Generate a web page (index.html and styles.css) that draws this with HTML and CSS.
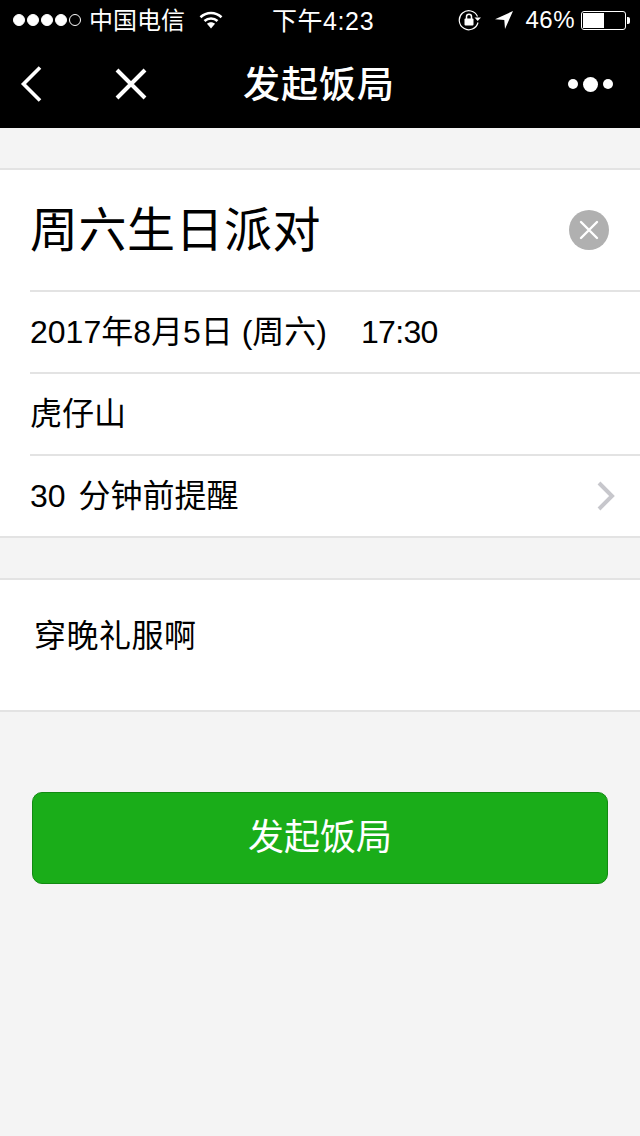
FILE: index.html
```html
<!DOCTYPE html>
<html lang="zh-CN">
<head>
  <meta charset="UTF-8" />
  <title>发起饭局</title>
  <meta name="viewport" content="width=device-width, initial-scale=1.0" />
  <link rel="stylesheet" href="styles.css">
</head>
<body>
  <div class="statusbar">
    <div class="status-left">
      <span class="signal">
        <i class="dot"></i><i class="dot"></i><i class="dot"></i><i class="dot"></i><i class="dot empty"></i>
      </span>
      <span class="carrier">中国电信</span>
      <svg class="wifi" width="24" height="18" viewBox="0 0 24 18">
        <path d="M1.500 6.200C7.500 .6 16.500 .6 22.500 6.200" fill="none" stroke="#fff" stroke-width="2.600"/>
        <path d="M5.500 10C9.200 6.600 14.800 6.600 18.500 10" fill="none" stroke="#fff" stroke-width="2.600"/>
        <path d="M8 12.800C10.400 10.800 13.600 10.800 16 12.800L12 17.500Z" fill="#fff"/>
      </svg>
    </div>
    <div class="status-time">下午4:23</div>
    <div class="status-right">
      <svg class="lock" width="24" height="22" viewBox="0 0 24 22">
        <path d="M20 13.500A9.500 9.500 0 1 1 19.500 7.500" fill="none" stroke="#fff" stroke-width="1.200"/>
        <path d="M16.500 8.500H23L19.700 12Z" fill="#fff"/>
        <rect x="6.500" y="9.500" width="9" height="7" rx="1" fill="#fff"/>
        <path d="M8.500 10V7.800a2.500 2.500 0 0 1 5 0V10" fill="none" stroke="#fff" stroke-width="1.500"/>
      </svg>
      <svg class="arrow" width="20" height="20" viewBox="0 0 20 20">
        <path d="M19 1L1 9.300L10.300 10L11 19Z" fill="#fff"/>
      </svg>
      <span class="percent">46%</span>
      <span class="battery"><span class="battery-fill" style="width:50%"></span></span>
    </div>
  </div>

  <div class="navbar">
    <div class="nav-left">
      <svg class="nav-back" width="24" height="38" viewBox="0 0 24 38">
        <path d="M20 2.500L3.500 19L20 35.500" fill="none" stroke="#fff" stroke-width="3.600"/>
      </svg>
      <svg class="nav-close" width="32" height="32" viewBox="0 0 32 32">
        <path d="M2 2L30 30M30 2L2 30" fill="none" stroke="#fff" stroke-width="4"/>
      </svg>
    </div>
    <div class="nav-title">发起饭局</div>
    <div class="nav-more">
      <i class="more-dot"></i><i class="more-dot big"></i><i class="more-dot"></i>
    </div>
  </div>

  <div class="group">
    <div class="row row-title">
      <span class="title-text">周六生日派对</span>
      <span class="clear-btn">
        <svg width="20" height="20" viewBox="0 0 20 20">
          <path d="M2 2L18 18M18 2L2 18" fill="none" stroke="#fff" stroke-width="2.400" stroke-linecap="round"/>
        </svg>
      </span>
    </div>
    <div class="row"><span class="row-text">2017年8月5日 (周六)<span class="row-time">17:30</span></span></div>
    <div class="row"><span class="row-text">虎仔山</span></div>
    <div class="row">
      <span class="row-text remind">30 分钟前提醒</span>
      <svg class="chevron" width="18" height="30" viewBox="0 0 18 30">
        <path d="M2 2L15 15L2 28" fill="none" stroke="#c7c7cc" stroke-width="4"/>
      </svg>
    </div>
  </div>

  <div class="group note">穿晚礼服啊</div>

  <div class="actions">
    <button class="btn-primary">发起饭局</button>
  </div>
</body>
</html>
```

FILE: styles.css
```css
body {
  margin: 0;
  width: 640px;
  height: 1136px;
  overflow: hidden;
  background: #f4f4f4;
  color: #000;
  font-family: "Liberation Sans", "Noto Sans CJK SC", sans-serif;
}

.statusbar {
  height: 40px;
  background: #000;
  color: #fff;
  display: flex;
  align-items: center;
  font-size: 24px;
}

.status-left, .status-right {
  flex: 1 1 0;
  display: flex;
  align-items: center;
}

.status-left { padding-left: 13px; }
.status-right { justify-content: flex-end; padding-right: 14px; }

.status-time {
  margin-left: 7px;
  padding-bottom: 3px;
  font-size: 25px;
  letter-spacing: 0.6px;
}

.signal { display: flex; gap: 2px; margin-right: 8px; }

.dot {
  width: 10px;
  height: 10px;
  border-radius: 50%;
  background: #fff;
  border: 1px solid #fff;
}

.dot.empty { background: none; }

.carrier { padding-bottom: 3px; }

.wifi { margin-left: 14px; }

.arrow { margin-left: 12px; }

.percent { margin-left: 11px; margin-right: 6px; padding-bottom: 1px; letter-spacing: 0.5px; }

.battery {
  width: 45px;
  height: 19px;
  padding: 1px;
  box-sizing: border-box;
  border: 1px solid #fff;
  border-radius: 3px;
  display: block;
  position: relative;
}

.battery::after {
  content: "";
  position: absolute;
  right: -5px;
  top: 5px;
  width: 3px;
  height: 7px;
  background: #fff;
  border-radius: 0 2px 2px 0;
}

.battery-fill { display: block; height: 100%; background: #fff; }

.navbar {
  height: 88px;
  background: #000;
  color: #fff;
  display: flex;
  align-items: center;
}

.nav-left, .nav-more {
  flex: 1 1 0;
  display: flex;
  align-items: center;
}

.nav-left { padding-left: 20px; }
.nav-back { margin-right: 71px; }

.nav-title {
  margin-left: 5px;
  padding-bottom: 4px;
  font-size: 37px;
  font-weight: 500;
  letter-spacing: 1px;
}

.nav-more { justify-content: flex-end; gap: 5px; padding-right: 27px; }

.more-dot { width: 10px; height: 10px; border-radius: 50%; background: #fff; }
.more-dot.big { width: 15px; height: 15px; }

.group {
  margin-top: 40px;
  background: #fff;
  border-top: 2px solid #e3e3e3;
  border-bottom: 2px solid #e3e3e3;
}

.row {
  height: 82px;
  box-sizing: border-box;
  margin-left: 30px;
  padding-right: 25px;
  border-top: 2px solid #e3e3e3;
  display: flex;
  align-items: center;
  justify-content: space-between;
  font-size: 32px;
  white-space: pre;
}

.row-text { padding-bottom: 7px; }

.row-time { margin-left: 34px; letter-spacing: -0.7px; }

.remind { word-spacing: 4px; }

.row-title {
  height: 120px;
  border-top: none;
  padding-right: 31px;
}

.title-text {
  padding-bottom: 8px;
  font-size: 48px;
  letter-spacing: 0.5px;
}

.clear-btn {
  width: 40px;
  height: 40px;
  border-radius: 50%;
  background: #b0b0b0;
  display: flex;
  align-items: center;
  justify-content: center;
}

.note {
  height: 134px;
  box-sizing: border-box;
  padding: 36px 0 0 34px;
  font-size: 32px;
  line-height: 40px;
  letter-spacing: 0.5px;
}

.actions { padding: 80px 32px 0; }

.btn-primary {
  display: block;
  width: 100%;
  height: 92px;
  padding: 0 0 8px;
  background: #1aad19;
  border: 1px solid #128a12;
  border-radius: 10px;
  color: #fff;
  font-family: inherit;
  font-size: 36px;
}
```
